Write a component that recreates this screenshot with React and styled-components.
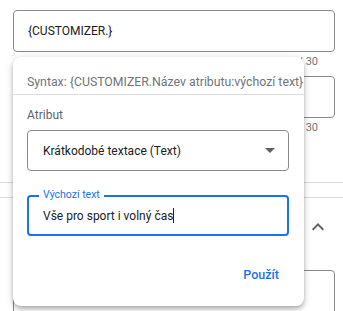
import { createGlobalStyle, styled } from "styled-components";

const GlobalStyle = createGlobalStyle`
  html, body {
    margin: 0;
    padding: 0;
    background: #fff;
  }
  body {
    font-family: Roboto, "Liberation Sans", Arial, sans-serif;
    color: #202124;
  }
`;

const App = () => {
  return (
    <Page>
      <GlobalStyle />
      <Fields>
        <Counter $first>0 / 30</Counter>
        <Input>{"{CUSTOMIZER.}"}</Input>
        <Counter>13 / 30</Counter>
        <Input />
        <Counter>13 / 30</Counter>
      </Fields>
      <Divider />
      <Section>
        <SectionHeader>
          <svg width="24" height="24" viewBox="0 0 24 24">
            <path
              d="M12 8l-6 6 1.41 1.41L12 10.83l4.59 4.58L18 14z"
              fill="#5f6368"
            />
          </svg>
        </SectionHeader>
        <SectionBody>
          <Input $tall />
        </SectionBody>
      </Section>

      <Popup>
        <SyntaxRow>Syntax: {"{CUSTOMIZER.Název atributu:výchozí text}"}</SyntaxRow>
        <PopupBody>
          <Label>Atribut</Label>
          <Select>
            <span>Krátkodobé textace (Text)</span>
            <Arrow />
          </Select>
          <Outlined>
            <Legend>Výchozí text</Legend>
            <span>Vše pro sport i volný čas</span>
            <Caret />
          </Outlined>
          <Footer>
            <TextButton>Použít</TextButton>
          </Footer>
        </PopupBody>
      </Popup>
    </Page>
  );
};

export default App;

const Page = styled.div`
  position: relative;
  width: 343px;
  height: 311px;
  overflow: hidden;
`;

const Fields = styled.div`
  margin-top: -14px;
  padding: 0 8px 0 13px;
`;

const Counter = styled.div`
  height: ${(p) => (p.$first ? "24px" : "24px")};
  padding: 3px 17px 0 0;
  box-sizing: border-box;
  text-align: right;
  font-size: 11px;
  line-height: 14px;
  color: #757575;
`;

const Input = styled.div`
  height: ${(p) => (p.$tall ? "80px" : "42px")};
  box-sizing: border-box;
  border: 1px solid #8a8a8a;
  border-radius: 4px;
  padding: 0 14px;
  display: flex;
  align-items: ${(p) => (p.$tall ? "flex-start" : "center")};
  font-size: 12px;
  color: #202124;
`;

const Divider = styled.div`
  margin-top: 40px;
  height: 1px;
  background: #dadce0;
`;

const Section = styled.div`
  margin-top: 14px;
  border-top: 1px solid #dadce0;
`;

const SectionHeader = styled.div`
  height: 58px;
  display: flex;
  align-items: center;
  justify-content: flex-end;
  padding-right: 13px;
`;

const SectionBody = styled.div`
  padding: 14px 8px 0 13px;
`;

const Popup = styled.div`
  position: absolute;
  left: 13px;
  top: 57px;
  width: 291px;
  height: 249px;
  background: #fff;
  border-radius: 8px;
  box-shadow: 0 2px 4px -1px rgba(0, 0, 0, 0.2), 0 4px 5px 0 rgba(0, 0, 0, 0.14),
    0 1px 10px 0 rgba(0, 0, 0, 0.12);
`;

const SyntaxRow = styled.div`
  height: 38px;
  box-sizing: border-box;
  padding: 18px 14px 0;
  border-bottom: 1px solid #dadce0;
  font-size: 12.3px;
  line-height: 14px;
  color: #70757a;
  white-space: nowrap;
`;

const PopupBody = styled.div`
  padding: 0 15px 0 14px;
`;

const Label = styled.div`
  margin-top: 11px;
  font-size: 12px;
  line-height: 18px;
  color: #5f6368;
`;

const Select = styled.div`
  margin-top: 6px;
  height: 41px;
  box-sizing: border-box;
  border: 1px solid #8a8a8a;
  border-radius: 4px;
  padding: 0 13px 0 15px;
  display: flex;
  align-items: center;
  justify-content: space-between;
  font-size: 12px;
  color: #202124;
`;

const Arrow = styled.span`
  width: 0;
  height: 0;
  border-left: 5px solid transparent;
  border-right: 5px solid transparent;
  border-top: 5px solid #616161;
`;

const Outlined = styled.div`
  position: relative;
  margin-top: 24px;
  height: 41px;
  box-sizing: border-box;
  border: 2px solid #1a73e8;
  border-radius: 4px;
  padding: 0 14px;
  display: flex;
  align-items: center;
  font-size: 12px;
  color: #202124;
`;

const Legend = styled.span`
  position: absolute;
  left: 10px;
  top: -8px;
  padding: 0 4px;
  background: #fff;
  font-size: 10.5px;
  line-height: 12px;
  color: #1a73e8;
`;

const Caret = styled.span`
  display: inline-block;
  width: 1px;
  height: 15px;
  background: #202124;
`;

const Footer = styled.div`
  margin-top: 20px;
  display: flex;
  justify-content: flex-end;
`;

const TextButton = styled.button`
  height: 36px;
  padding: 0 10px;
  border: none;
  background: none;
  font-family: Roboto, "Liberation Sans", Arial, sans-serif;
  font-size: 12.5px;
  font-weight: 500;
  color: #1a73e8;
  cursor: pointer;
`;
